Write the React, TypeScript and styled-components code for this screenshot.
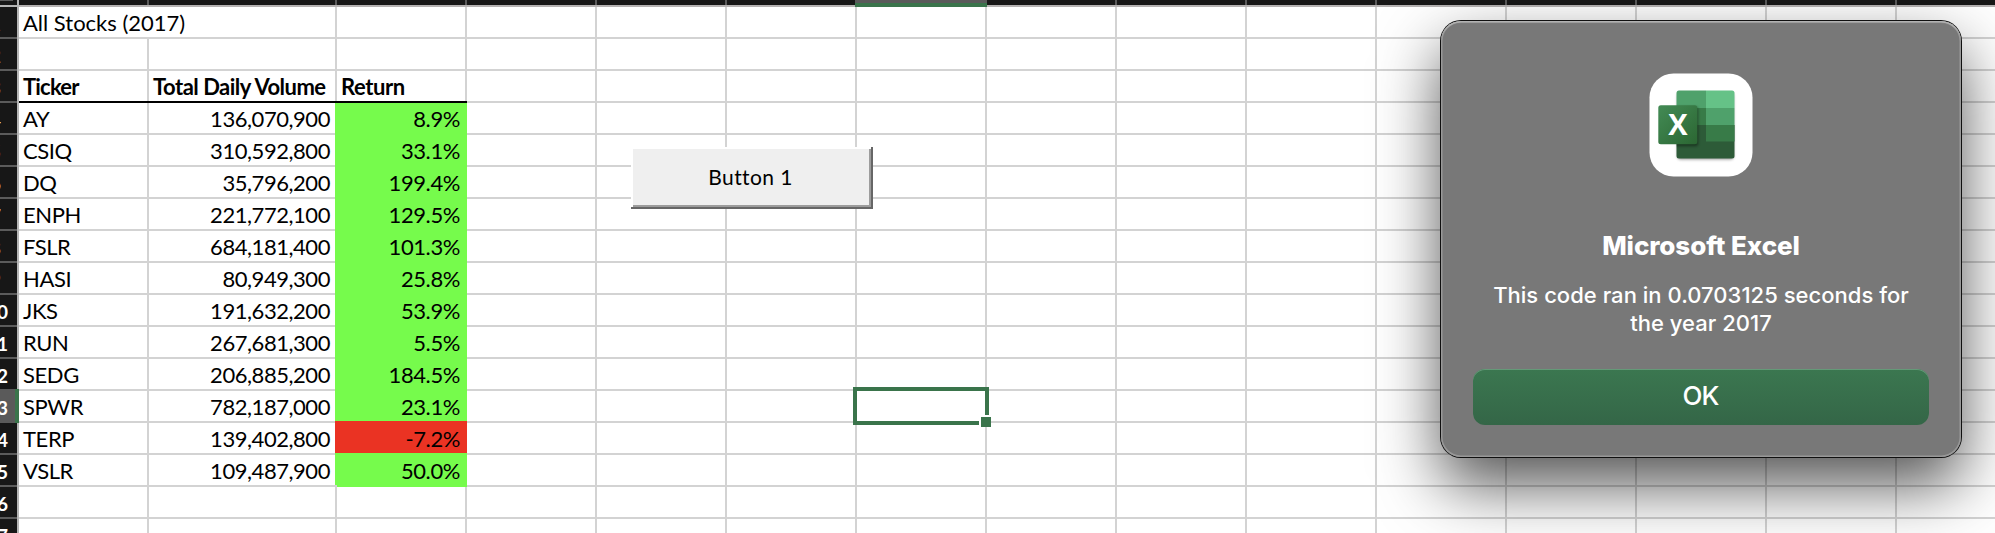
import React from "react";
import styled, { createGlobalStyle, css } from "styled-components";

const GlobalStyle = createGlobalStyle`
  html, body { margin: 0; padding: 0; background: #fff; }
  body { overflow: hidden; }
  *, *::before, *::after { box-sizing: border-box; }
`;

const GREEN = "#76fb4c";
const RED = "#ea3323";
const ACCENT = "#3a744b";
const LINE = "#d3d3d3";

const Sheet = styled.main`
  position: relative;
  width: 1995px;
  height: 533px;
  overflow: hidden;
  background: #fff;
  color: #000;
  font-family: "Lato", "Liberation Sans", sans-serif;
`;

const ColumnHeaders = styled.div`
  display: flex;
  width: 2027px;
  height: 7px;
`;

const Corner = styled.div`
  flex: none;
  width: 19px;
  height: 7px;
  background: linear-gradient(#5b5b5b, #5b5b5b) 0 0 / 13px 1px no-repeat #171717;
  border-right: 2px solid #b5b5b5;
  border-bottom: 2px solid #b5b5b5;
`;

const ColumnHeader = styled.div<{ $width: number; $selected?: boolean }>`
  flex: none;
  width: ${(p) => p.$width}px;
  height: 7px;
  background: linear-gradient(#5b5b5b, #5b5b5b) right top / 2px 5px no-repeat #171717;
  box-shadow: inset 0 -2px 0 #b5b2b2;
  ${(p) =>
    p.$selected &&
    css`
      position: relative;
      width: ${p.$width + 2}px;
      margin-left: -2px;
      background: #5a5a5a;
      box-shadow: inset 0 -4px 0 ${ACCENT};
    `}
`;

const Row = styled.div<{ $raised?: boolean }>`
  display: flex;
  width: 2027px;
  height: 32px;
  ${(p) => p.$raised && "position: relative;"}
`;

const RowHeader = styled.div<{ $selected: boolean; $single: boolean }>`
  flex: none;
  display: flex;
  justify-content: flex-end;
  width: 19px;
  height: 32px;
  overflow: hidden;
  padding-right: ${(p) => (p.$single ? 18 : 11)}px;
  background: linear-gradient(#5b5b5b, #5b5b5b) 0 100% / 17px 2px no-repeat #171717;
  box-shadow: inset -2px 0 0 #b5b5b5;
  color: #fff;
  font-size: 19px;
  font-weight: ${(p) => (p.$single ? 400 : 700)};
  line-height: 33px;
  ${(p) =>
    p.$selected &&
    css`
      height: 34px;
      margin-top: -2px;
      padding-top: 2px;
      background: #5a5a5a;
      box-shadow: inset -4px 0 0 ${ACCENT};
    `}
`;

const Cell = styled.div<{
  $width: number;
  $align?: "left" | "right";
  $pad?: number;
  $heading?: boolean;
  $fill?: string;
  $spacing?: number;
}>`
  flex: none;
  width: ${(p) => p.$width}px;
  height: 32px;
  padding: 0 ${(p) => p.$pad ?? 4}px;
  border-right: 2px solid ${LINE};
  border-bottom: 2px solid ${LINE};
  font-size: 22px;
  font-weight: ${(p) => (p.$heading ? 700 : 400)};
  line-height: ${(p) => (p.$heading ? 32 : 31)}px;
  letter-spacing: ${(p) => p.$spacing ?? -0.4}px;
  text-align: ${(p) => p.$align ?? "left"};
  white-space: nowrap;
  ${(p) =>
    p.$fill &&
    css`
      background: ${p.$fill};
      border-color: ${p.$fill};
      box-shadow: -2px -2px 0 ${p.$fill}, 0 -2px 0 ${p.$fill};
    `}
`;

const HeadingRule = styled.div`
  position: absolute;
  left: 19px;
  bottom: 0;
  width: 448px;
  height: 2px;
  background: #000;
`;

const SelectedCell = styled.div`
  position: absolute;
  left: 853px;
  top: 387px;
  width: 136px;
  height: 38px;
  border: 4px solid ${ACCENT};
  background: #fff;
`;

const FillHandle = styled.span`
  position: absolute;
  right: -6px;
  bottom: -6px;
  width: 10px;
  height: 10px;
  background: ${ACCENT};
  box-shadow: -2px -2px 0 #fff;
`;

const SheetButton = styled.button`
  position: absolute;
  left: 631px;
  top: 147px;
  width: 242px;
  height: 62px;
  padding: 0 3px 3px 0;
  border: 0;
  background: #efefef;
  box-shadow: inset -2px -2px 0 #666, inset 2px 2px 0 #fff, inset -4px -4px 0 #9c9c9c;
  color: #000;
  font: 400 21px/30px "Lato", "Liberation Sans", sans-serif;
  letter-spacing: 0.4px;
`;

const Dialog = styled.section`
  position: absolute;
  left: 1441px;
  top: 21px;
  width: 520px;
  height: 436px;
  display: flex;
  flex-direction: column;
  align-items: center;
  padding: 52px 32px 32px;
  border-radius: 20px;
  background: #787878;
  box-shadow: inset 0 2px 1px -0.5px #b4b4b4, inset 0 0 0 1.5px #989898, 0 0 0 1px #101010,
    0 28px 64px rgba(0, 0, 0, 0.68);
  color: #fff;
  font-family: "Inter", "Liberation Sans", sans-serif;
  text-align: center;
`;

const AppIcon = styled.svg`
  flex: none;
  display: block;
  width: 104px;
  height: 104px;
`;

const DialogTitle = styled.h1`
  margin: 52px 0 0;
  font-size: 26px;
  font-weight: 800;
  line-height: 34px;
  letter-spacing: -0.1px;
`;

const DialogMessage = styled.p`
  margin: 18px 0 0;
  font-size: 22px;
  font-weight: 500;
  line-height: 28px;
  letter-spacing: 0.03px;
  white-space: nowrap;
`;

const OkButton = styled.button`
  width: 456px;
  height: 56px;
  margin-top: auto;
  padding: 0 1px 2px 0;
  border: 0;
  border-radius: 12px;
  background: linear-gradient(#3b7750, #346647);
  box-shadow: inset 0 1px 0 #649a78;
  color: #fff;
  font: 500 26px/32px "Inter", "Liberation Sans", sans-serif;
  letter-spacing: -0.9px;
`;

const stocks: [string, string, string][] = [
  ["AY", "136,070,900", "8.9%"],
  ["CSIQ", "310,592,800", "33.1%"],
  ["DQ", "35,796,200", "199.4%"],
  ["ENPH", "221,772,100", "129.5%"],
  ["FSLR", "684,181,400", "101.3%"],
  ["HASI", "80,949,300", "25.8%"],
  ["JKS", "191,632,200", "53.9%"],
  ["RUN", "267,681,300", "5.5%"],
  ["SEDG", "206,885,200", "184.5%"],
  ["SPWR", "782,187,000", "23.1%"],
  ["TERP", "139,402,800", "-7.2%"],
  ["VSLR", "109,487,900", "50.0%"],
];

const columnWidths = [130, 188, ...Array(13).fill(130)];
const emptyColumns = Array.from({ length: 12 }, (_, i) => i);

function RowCells({ row }: { row: number }) {
  if (row === 1) {
    return (
      <>
        <Cell $width={318} $spacing={0}>All Stocks (2017)</Cell>
        <Cell $width={130} />
      </>
    );
  }
  if (row === 3) {
    return (
      <>
        <Cell $width={130} $heading $spacing={-0.8}>Ticker</Cell>
        <Cell $width={188} $heading $spacing={-0.5}>Total Daily Volume</Cell>
        <Cell $width={130} $heading $spacing={-0.4}>Return</Cell>
      </>
    );
  }
  const stock = stocks[row - 4];
  if (!stock) {
    return (
      <>
        <Cell $width={130} />
        <Cell $width={188} />
        <Cell $width={130} />
      </>
    );
  }
  const [ticker, volume, change] = stock;
  return (
    <>
      <Cell $width={130}>{ticker}</Cell>
      <Cell $width={188} $align="right" $pad={5} $spacing={-0.45}>{volume}</Cell>
      <Cell $width={130} $align="right" $pad={5} $fill={change.startsWith("-") ? RED : GREEN}>
        {change}
      </Cell>
    </>
  );
}

function ExcelIcon() {
  return (
    <AppIcon viewBox="0 0 104 104">
      <defs>
        <linearGradient id="tile" x1="0" y1="0" x2="1" y2="1">
          <stop offset="0" stopColor="#438b55" />
          <stop offset="1" stopColor="#2b6632" />
        </linearGradient>
        <clipPath id="book">
          <rect x="27.5" y="17.5" width="58" height="68" rx="2.5" />
        </clipPath>
        <filter id="soft" x="-30%" y="-30%" width="160%" height="160%">
          <feGaussianBlur stdDeviation="1.5" />
        </filter>
      </defs>
      <rect x="0.5" y="0.5" width="103" height="103" rx="24" fill="#fff" />
      <rect x="28.5" y="20" width="56" height="66.5" rx="3" fill="#000" opacity="0.4" filter="url(#soft)" />
      <g clipPath="url(#book)">
        <rect x="27" y="17" width="30" height="18" fill="#4fa16b" />
        <rect x="57" y="17" width="30" height="18" fill="#65c287" />
        <rect x="27" y="35" width="30" height="17" fill="#387b48" />
        <rect x="57" y="35" width="30" height="17" fill="#4fa16b" />
        <rect x="27" y="52" width="60" height="34" fill="#2d5b38" />
        <rect x="57" y="52" width="30" height="16.5" fill="#387b48" />
        <rect x="12" y="34" width="37" height="39" rx="2" fill="#000" opacity="0.45" filter="url(#soft)" />
      </g>
      <rect x="9.3" y="32.3" width="39" height="39" rx="2.5" fill="url(#tile)" />
      <text
        x="28.8"
        y="62"
        textAnchor="middle"
        fill="#fff"
        fontFamily="Open Sans, sans-serif"
        fontWeight="700"
        fontSize="29"
      >
        X
      </text>
    </AppIcon>
  );
}

export default function App() {
  return (
    <Sheet>
      <GlobalStyle />
      <ColumnHeaders>
        <Corner />
        {columnWidths.map((width, i) => (
          <ColumnHeader key={i} $width={width} $selected={i === 6} />
        ))}
      </ColumnHeaders>
      {Array.from({ length: 17 }, (_, i) => i + 1).map((row) => (
        <Row key={row} $raised={row === 3}>
          <RowHeader $selected={row === 13} $single={row < 10}>{row}</RowHeader>
          <RowCells row={row} />
          {emptyColumns.map((i) => (
            <Cell key={i} $width={130} />
          ))}
          {row === 3 && <HeadingRule />}
        </Row>
      ))}
      <SheetButton>Button 1</SheetButton>
      <SelectedCell>
        <FillHandle />
      </SelectedCell>
      <Dialog role="alertdialog">
        <ExcelIcon />
        <DialogTitle>Microsoft Excel</DialogTitle>
        <DialogMessage>
          This code ran in 0.0703125 seconds for
          <br />
          the year 2017
        </DialogMessage>
        <OkButton>OK</OkButton>
      </Dialog>
    </Sheet>
  );
}
